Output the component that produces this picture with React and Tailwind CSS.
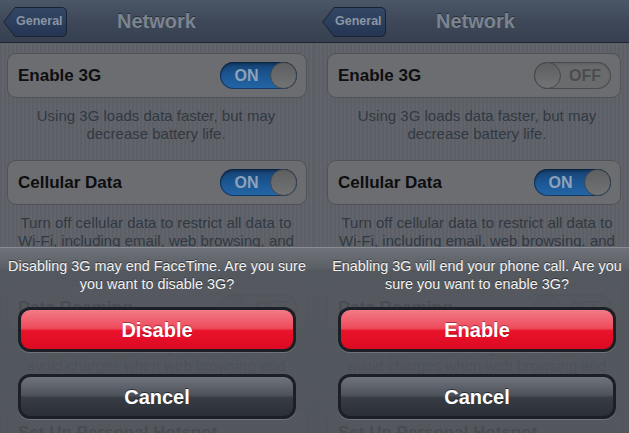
import React from "react";

function BackButton() {
  return (
    <div className="relative flex h-[30px] w-[64px] items-center">
      <svg className="absolute inset-0" width="64" height="30" viewBox="0 0 64 30">
        <defs>
          <linearGradient id="bb" x1="0" y1="0" x2="0" y2="1">
            <stop offset="0" stopColor="#344866" />
            <stop offset="1" stopColor="#233552" />
          </linearGradient>
        </defs>
        <path d="M12 0.5 H59 a4.5 4.5 0 0 1 4.5 4.5 V25 a4.5 4.5 0 0 1 -4.5 4.5 H12 L0.8 15 Z" fill="url(#bb)" stroke="#1a2231" strokeWidth="1" />
      </svg>
      <span className="relative w-full pl-[13px] text-[12.5px] font-bold text-[#8a95a4]">General</span>
    </div>
  );
}

function Toggle({ on }) {
  if (on) {
    return (
      <div className="flex h-[27px] w-[77px] shrink-0 items-center rounded-full bg-[linear-gradient(to_bottom,#143f6e,#1b5590_45%,#2466a8)] shadow-[inset_0_0_0_1px_rgba(10,30,60,0.6),inset_0_2px_3px_rgba(0,0,0,0.3)]">
        <span className="w-[50px] pl-[3px] text-center text-[16px] font-bold text-[#8da2b8]">ON</span>
        <span className="h-[27px] w-[27px] rounded-full border border-[#45474b] bg-[linear-gradient(to_bottom,#5e5f61,#727375)]" />
      </div>
    );
  }
  return (
    <div className="flex h-[27px] w-[77px] shrink-0 items-center rounded-full bg-[#6a6b6d] shadow-[inset_0_0_0_1px_#4a4b4e,inset_0_2px_3px_rgba(0,0,0,0.15)]">
      <span className="h-[27px] w-[27px] rounded-full border border-[#45474b] bg-[linear-gradient(to_bottom,#5e5f61,#727375)]" />
      <span className="w-[50px] pr-[2px] text-center text-[16px] font-bold text-[#4a4c4f]">OFF</span>
    </div>
  );
}

function Cell({ label, toggle, cellClass }) {
  return (
    <div className={`flex h-[45px] items-center justify-between rounded-[9px] border border-[#505257] bg-[#6c6d70] pl-[10px] pr-[9px] ${cellClass}`}>
      <span className="text-[17px] font-bold text-[#0d0e10]">{label}</span>
      {toggle !== undefined && <Toggle on={toggle} />}
    </div>
  );
}

function Footer({ lines, footClass }) {
  return (
    <div className={`mt-[9px] text-center text-[15px] leading-[18px] text-[#323842] ${footClass}`}>
      {lines.map((l) => (
        <div key={l} className="whitespace-nowrap">{l}</div>
      ))}
    </div>
  );
}

function Panel({ enable3g, message, action, navClass, cellClass, footClass, msgClass, sheetClass }) {
  return (
    <div className="relative h-[433px] overflow-hidden bg-[repeating-linear-gradient(90deg,#5c6066_0px,#5c6066_2px,#61656b_2px,#61656b_4px)]">
      <div className={`grid h-[43px] grid-cols-[1fr_auto_1fr] items-center border-b border-[#1f2631] bg-[linear-gradient(to_bottom,#4b5666,#3e4858_50%,#364050)] ${navClass}`}>
        <div className="pt-[1px]">
          <BackButton />
        </div>
        <div className="text-[20px] font-bold text-[#7c8490] [text-shadow:0_-1px_0_rgba(0,0,0,0.4)]">Network</div>
        <div />
      </div>

      <div className="mt-[10px]">
        <Cell label="Enable 3G" toggle={enable3g} cellClass={cellClass} />
      </div>
      <Footer lines={["Using 3G loads data faster, but may", "decrease battery life."]} footClass={footClass} />

      <div className="mt-[17px]">
        <Cell label="Cellular Data" toggle={true} cellClass={cellClass} />
      </div>
      <Footer
        lines={[
          "Turn off cellular data to restrict all data to",
          "Wi-Fi, including email, web browsing, and",
          "push notifications.",
        ]}
        footClass={footClass}
      />

      <div className="mt-[17px]">
        <Cell label="Data Roaming" toggle={false} cellClass={cellClass} />
      </div>
      <Footer
        lines={[
          "Turn off data roaming when abroad to",
          "avoid charges when web browsing and",
          "sending email and other data services.",
        ]}
        footClass={footClass}
      />

      <div className="mt-[17px]">
        <Cell label="Set Up Personal Hotspot" cellClass={cellClass} />
      </div>

      <div className="absolute inset-x-0 bottom-0 top-[247px] border-t border-[#8a8e94] bg-[linear-gradient(to_bottom,rgba(112,116,122,0.95),rgba(90,94,101,0.9)_21px,rgba(82,86,93,0.88)_22px,rgba(80,84,91,0.88))]">
        <div className={`pt-[9px] text-center text-[14.4px] leading-[18px] text-[#f2f2f2] [text-shadow:0_-1px_0_rgba(0,0,0,0.45)] ${msgClass}`}>
          {message.map((l) => (
            <div key={l} className="whitespace-nowrap">{l}</div>
          ))}
        </div>
        <div className={`mt-[14px] flex flex-col gap-[22px] ${sheetClass}`}>
          <div className="h-[45px] rounded-[12px] bg-[#1c1f25] p-[3px] shadow-[0_1px_0_rgba(255,255,255,0.18)]">
            <div className="flex h-full items-center justify-center rounded-[9px] bg-[linear-gradient(to_bottom,#f27b88,#ee4a5b_47%,#e9122b_53%,#dc0a22)] text-[20px] font-bold text-white [text-shadow:0_-1px_0_rgba(0,0,0,0.35)]">
              {action}
            </div>
          </div>
          <div className="h-[45px] rounded-[12px] bg-[#1c1f25] p-[3px] shadow-[0_1px_0_rgba(255,255,255,0.18)]">
            <div className="flex h-full items-center justify-center rounded-[9px] bg-[linear-gradient(to_bottom,#70757d,#4d525a_47%,#373c44_53%,#2b3038)] text-[20px] font-bold text-white [text-shadow:0_-1px_0_rgba(0,0,0,0.5)]">
              Cancel
            </div>
          </div>
        </div>
      </div>
    </div>
  );
}

export default function App() {
  return (
    <div className="grid h-[433px] w-[629px] grid-cols-[314px_315px] overflow-hidden font-['Liberation_Sans',Arial,sans-serif]">
      <Panel
        enable3g={true}
        message={["Disabling 3G may end FaceTime. Are you sure", "you want to disable 3G?"]}
        action="Disable"
        navClass="pl-[3px] pr-[4px]"
        cellClass="ml-[7px] mr-[7px]"
        footClass="pr-[2px]"
        msgClass="pr-[0px]"
        sheetClass="ml-[18px] mr-[18px]"
      />
      <Panel
        enable3g={false}
        message={["Enabling 3G will end your phone call. Are you", "sure you want to enable 3G?"]}
        action="Enable"
        navClass="pl-[8px] pr-[0px]"
        cellClass="ml-[13px] mr-[8px]"
        footClass="pl-[11px]"
        msgClass="pl-[11px]"
        sheetClass="ml-[24px] mr-[13px]"
      />
    </div>
  );
}
